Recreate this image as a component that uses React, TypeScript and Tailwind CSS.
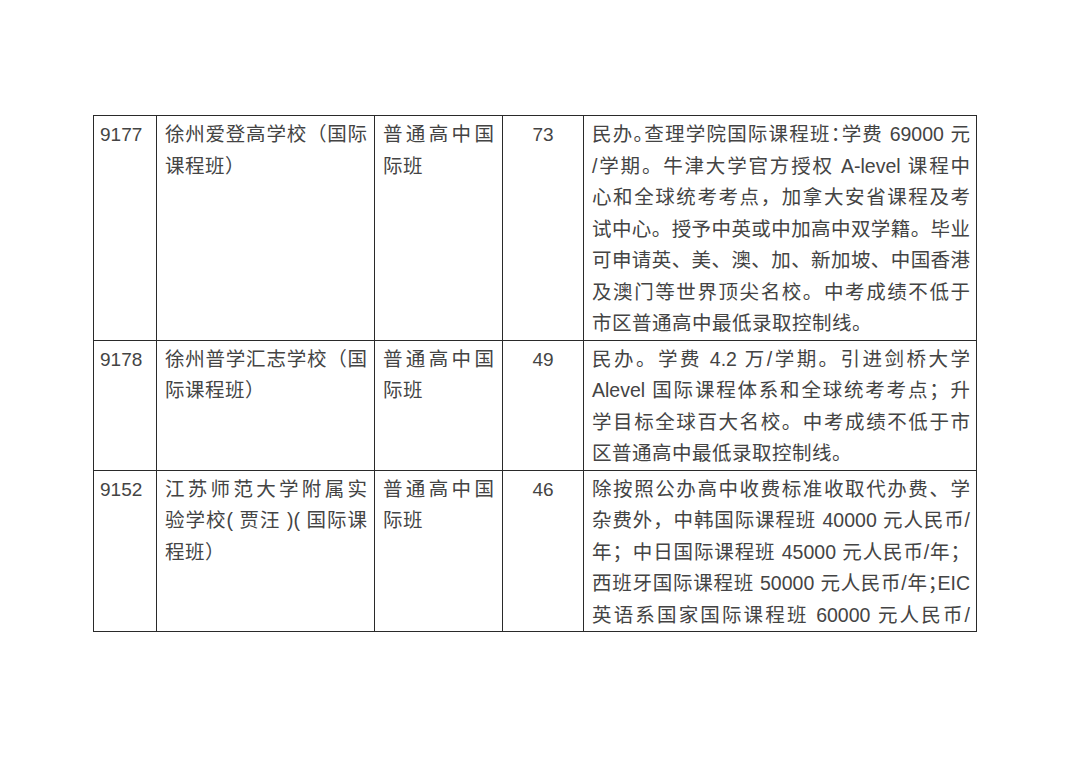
import React from 'react'

// a line is either plain text, or [text, true] when its punctuation
// has to be set half-width to fit the cell
type Line = string | [string, boolean]

interface Row {
  code: string
  name: Line[]
  type: Line[]
  count: string
  note: Line[]
  // last note line continues on next page, so it is justified too
  noteFull?: boolean
}

const rows: Row[] = [
  {
    code: '9177',
    name: ['徐州爱登高学校（国际', '课程班）'],
    type: ['普通高中国', '际班'],
    count: '73',
    note: [
      ['民办。查理学院国际课程班：学费 69000 元', true],
      '/学期。牛津大学官方授权 A-level 课程中',
      '心和全球统考考点，加拿大安省课程及考',
      '试中心。授予中英或中加高中双学籍。毕业',
      '可申请英、美、澳、加、新加坡、中国香港',
      '及澳门等世界顶尖名校。中考成绩不低于',
      '市区普通高中最低录取控制线。',
    ],
  },
  {
    code: '9178',
    name: ['徐州普学汇志学校（国', '际课程班）'],
    type: ['普通高中国', '际班'],
    count: '49',
    note: [
      '民办。学费 4.2 万/学期。引进剑桥大学',
      'Alevel 国际课程体系和全球统考考点；升',
      '学目标全球百大名校。中考成绩不低于市',
      '区普通高中最低录取控制线。',
    ],
  },
  {
    code: '9152',
    name: ['江苏师范大学附属实', '验学校( 贾汪 )( 国际课', '程班）'],
    type: ['普通高中国', '际班'],
    count: '46',
    note: [
      '除按照公办高中收费标准收取代办费、学',
      '杂费外，中韩国际课程班 40000 元人民币/',
      '年；中日国际课程班 45000 元人民币/年；',
      ['西班牙国际课程班 50000 元人民币/年；EIC', true],
      '英语系国家国际课程班 60000 元人民币/',
    ],
    noteFull: true,
  },
]

function Lines({ lines, full }: { lines: Line[]; full?: boolean }) {
  return (
    <>
      {lines.map((line, i) => {
        const text = typeof line === 'string' ? line : line[0]
        const halt = typeof line !== 'string' && line[1]
        const justify = full || i < lines.length - 1
        return (
          <div
            key={i}
            className={`whitespace-nowrap ${
              justify ? 'text-justify [text-align-last:justify]' : 'text-left tracking-[0.5px]'
            } ${halt ? "[font-feature-settings:'halt']" : ''}`}
          >
            {text}
          </div>
        )
      })}
    </>
  )
}

export default function App() {
  const cell = 'border border-[#2a2a2a] pt-[3px] align-top'

  return (
    <div
      className="min-h-[764px] w-[1080px] bg-white pl-[93px] pt-[115px] text-[19.5px] leading-[31.5px] text-[#444]"
      style={{ fontFamily: '"Liberation Sans", "Noto Sans CJK SC", sans-serif' }}
    >
      <table className="w-[883px] table-fixed border-collapse">
        <colgroup>
          <col className="w-[63px]" />
          <col className="w-[218px]" />
          <col className="w-[128px]" />
          <col className="w-[81px]" />
          <col className="w-[393px]" />
        </colgroup>
        <tbody>
          {rows.map((row) => (
            <tr key={row.code}>
              <td className={`${cell} px-[6px] text-[19px]`}>{row.code}</td>
              <td className={`${cell} pl-2 pr-[7px]`}>
                <Lines lines={row.name} />
              </td>
              <td className={`${cell} pl-2 pr-[8px]`}>
                <Lines lines={row.type} />
              </td>
              <td className={`${cell} px-2 text-center text-[19px]`}>{row.count}</td>
              <td className={`${cell} pl-2 pr-[6px]`}>
                <Lines lines={row.note} full={row.noteFull} />
              </td>
            </tr>
          ))}
        </tbody>
      </table>
    </div>
  )
}
